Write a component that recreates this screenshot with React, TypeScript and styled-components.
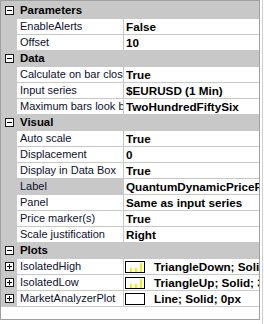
import styled, {createGlobalStyle} from 'styled-components'

type Prop = {
    name: string
    value: string
    expandable?: boolean
    swatch?: 'bars' | 'empty'
    selected?: boolean
}

type Category = {
    title: string
    props: Prop[]
}

const categories: Category[] = [
    {
        title: 'Parameters',
        props: [
            {name: 'EnableAlerts', value: 'False'},
            {name: 'Offset', value: '10'},
        ],
    },
    {
        title: 'Data',
        props: [
            {name: 'Calculate on bar close', value: 'True'},
            {name: 'Input series', value: '$EURUSD (1 Min)'},
            {name: 'Maximum bars look back', value: 'TwoHundredFiftySix'},
        ],
    },
    {
        title: 'Visual',
        props: [
            {name: 'Auto scale', value: 'True'},
            {name: 'Displacement', value: '0'},
            {name: 'Display in Data Box', value: 'True'},
            {name: 'Label', value: 'QuantumDynamicPriceFlow', selected: true},
            {name: 'Panel', value: 'Same as input series'},
            {name: 'Price marker(s)', value: 'True'},
            {name: 'Scale justification', value: 'Right'},
        ],
    },
    {
        title: 'Plots',
        props: [
            {name: 'IsolatedHigh', value: 'TriangleDown; Solid; 3px', expandable: true, swatch: 'bars'},
            {name: 'IsolatedLow', value: 'TriangleUp; Solid; 3px', expandable: true, swatch: 'bars'},
            {name: 'MarketAnalyzerPlot', value: 'Line; Solid; 0px', expandable: true, swatch: 'empty'},
        ],
    },
]

function ToggleBox({open}: {open: boolean}) {
    return (
        <Toggle>
            <svg width="9" height="9" viewBox="0 0 9 9">
                <rect x="0.5" y="0.5" width="8" height="8" fill="#fafafa" stroke="#1a1a1a" />
                <line x1="2" y1="4.5" x2="7" y2="4.5" stroke="#000" />
                {!open && <line x1="4.5" y1="2" x2="4.5" y2="7" stroke="#000" />}
            </svg>
        </Toggle>
    )
}

function PlotSwatch({kind}: {kind: 'bars' | 'empty'}) {
    return (
        <Swatch>
            {kind === 'bars' && (
                <svg width="18" height="10" viewBox="0 0 18 10">
                    <rect x="4" y="6" width="2" height="4" fill="#f5f000" />
                    <rect x="9" y="6" width="2" height="4" fill="#f5f000" />
                    <rect x="14" y="1" width="2" height="9" fill="#f5f000" />
                </svg>
            )}
        </Swatch>
    )
}

export default function App() {
    return (
        <>
            <GlobalStyle />
            <Frame>
                <Grid>
                    <TopEdge />
                    {categories.map((cat) => (
                        <div key={cat.title}>
                            <HeaderRow>
                                <Gutter>
                                    <ToggleBox open />
                                </Gutter>
                                <HeaderTitle>{cat.title}</HeaderTitle>
                            </HeaderRow>
                            {cat.props.map((p) => (
                                <PropRow key={p.name}>
                                    <Gutter>{p.expandable && <ToggleBox open={false} />}</Gutter>
                                    <NameCell selected={!!p.selected}>{p.name}</NameCell>
                                    <Divider />
                                    <ValueCell>
                                        {p.swatch && <PlotSwatch kind={p.swatch} />}
                                        <ValueText>{p.value}</ValueText>
                                    </ValueCell>
                                </PropRow>
                            ))}
                        </div>
                    ))}
                </Grid>
                <OuterEdge />
            </Frame>
        </>
    )
}

const GlobalStyle = createGlobalStyle`
    html, body {
        margin: 0;
        padding: 0;
        background: #ffffff;
    }
    body {
        font-family: "Liberation Sans", Arial, sans-serif;
    }
`

const Frame = styled.div`
    display: flex;
    width: 264px;
    height: 324px;
    background: #ffffff;
`

const Grid = styled.div`
    width: 260px;
    height: 320px;
    box-sizing: border-box;
    border: 1px solid #a0a0a0;
    background: #ffffff;
    overflow: hidden;
`

const OuterEdge = styled.div`
    width: 1px;
    height: 324px;
    margin-left: 2px;
    background: #cfcfcf;
`

const TopEdge = styled.div`
    height: 2px;
    background: #c8c8c8;
`

const HeaderRow = styled.div`
    display: flex;
    height: 16px;
    background: #c8c8c8;
`

const Gutter = styled.div`
    width: 16px;
    flex: none;
    display: flex;
    align-items: center;
    background: #c8c8c8;
`

const Toggle = styled.span`
    display: flex;
    margin-left: 4px;
    margin-top: -1px;
`

const HeaderTitle = styled.div`
    padding-left: 3px;
    font-size: 11.4px;
    font-weight: bold;
    line-height: 15px;
    color: #000;
`

const PropRow = styled.div`
    display: flex;
    height: 16px;
    box-sizing: border-box;
    border-bottom: 1px solid #c8c8c8;
`

const NameCell = styled.div<{selected: boolean}>`
    width: 106px;
    flex: none;
    padding-left: 3px;
    box-sizing: border-box;
    font-size: 11px;
    line-height: 15px;
    color: #0d1030;
    white-space: nowrap;
    overflow: hidden;
    background: ${(props) => (props.selected ? '#c8c8c8' : '#ffffff')};
`

const Divider = styled.div`
    width: 1px;
    flex: none;
    background: #c8c8c8;
`

const ValueCell = styled.div`
    flex: 1;
    min-width: 0;
    display: flex;
    align-items: center;
    padding-left: 2px;
    overflow: hidden;
`

const ValueText = styled.span`
    font-size: 11.7px;
    font-weight: bold;
    line-height: 15px;
    color: #000;
    white-space: nowrap;
`

const Swatch = styled.span`
    display: flex;
    flex: none;
    width: 20px;
    height: 12px;
    box-sizing: border-box;
    border: 1px solid #000;
    background: #fff;
    margin-left: -1px;
    margin-right: 9px;
`
